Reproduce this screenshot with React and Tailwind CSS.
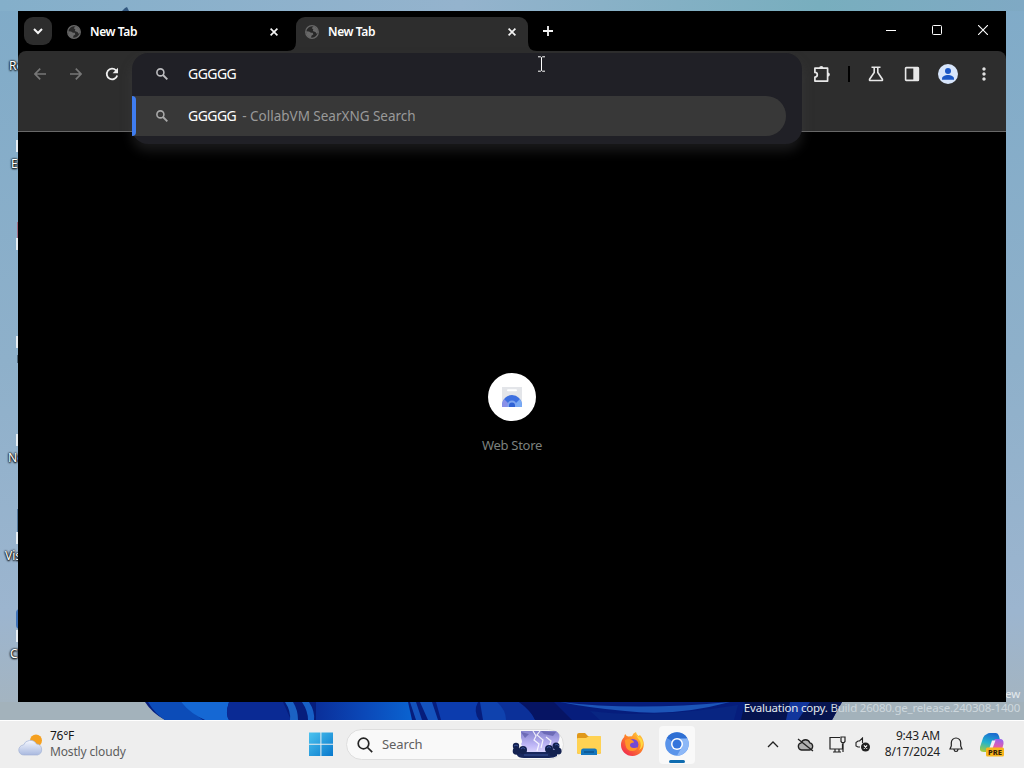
import React from 'react';
import { MdMoreVert } from 'react-icons/md';

const desktopLabels = [
  { text: 'Re', className: 'left-[9px] top-[58px]' },
  { text: 'Ed', className: 'left-[11px] top-[156px]' },
  { text: 'Ne', className: 'left-[8px] top-[450px]' },
  { text: 'Visu', className: 'left-[5px] top-[548px]' },
  { text: 'Ch', className: 'left-[10px] top-[646px]' },
];

function Wallpaper() {
  return (
    <svg className="absolute inset-0" width="1024" height="720" viewBox="0 0 1024 720">
      <defs>
        <linearGradient id="sky" x1="0" y1="0" x2="0" y2="1">
          <stop offset="0" stopColor="#80abc8" />
          <stop offset="0.5" stopColor="#8eb0ca" />
          <stop offset="0.85" stopColor="#9cb5cf" />
          <stop offset="1" stopColor="#a5b4be" />
        </linearGradient>
        <linearGradient id="top" x1="0" y1="0" x2="1" y2="0">
          <stop offset="0" stopColor="#84afca" />
          <stop offset="0.45" stopColor="#94b3cd" />
          <stop offset="0.8" stopColor="#78aebe" />
          <stop offset="1" stopColor="#7fa9c4" />
        </linearGradient>
        <linearGradient id="petal" x1="0" y1="0" x2="1" y2="0">
          <stop offset="0" stopColor="#0a2f9a" />
          <stop offset="0.5" stopColor="#0b48b8" />
          <stop offset="1" stopColor="#0a63d0" />
        </linearGradient>
      </defs>
      <rect width="1024" height="720" fill="url(#sky)" />
      <rect width="1024" height="11" fill="url(#top)" />
      <path d="M122 11l3-3 2-1 2 4z" fill="#31567e" />
      <rect y="702" width="1024" height="18" fill="#a3b2bb" />
      <path d="M145 702H842L832 720H165Q152 713 145 702z" fill="#061d7c" />
      <path d="M148 702h33q12 11 22 18h-38q-10-6-17-18z" fill="#0c4cb8" />
      <path d="M181 702h48q-4 12 0 18h-24q-14-6-24-18z" fill="#1568d4" />
      <path d="M229 702h54l8 18h-62q-4-6 0-18z" fill="#0a2a94" />
      <path d="M285 702h8q5 8 5 18h-8q1-9-5-18z" fill="#1b62c4" />
      <path d="M302 702h7q6 9 5 18h-6q0-9-6-18z" fill="#1760c6" />
      <path d="M316 702h92l4 18h-96z" fill="url(#petal)" />
      <path d="M410 702h6l6 18h-6zM420 702h12l6 18h-10z" fill="#1453bd" />
      <path d="M436 702h42q-5 9 1 18h-38z" fill="#0c3cae" />
      <path d="M480 702h35q15 8 20 18h-52z" fill="#0f42ae" />
      <path d="M497 702h22q12 9 16 18h-29q0-10-9-18z" fill="#0b3099" />
      <path d="M519 702h35l18 18h-37q-4-10-16-18z" fill="#061463" />
      <path d="M560 702q75 9 170 0-55 15-105 9-35-3-65-9z" fill="#1c55b8" />
      <path d="M590 711q60 8 148-6l-4 15H600z" fill="#082582" />
      <path d="M745 702h97l-10 18h-91z" fill="#06144f" />
      <path d="M790 702h20l-12 18h-12z" fill="#12369c" />
    </svg>
  );
}

function CloseIcon() {
  return (
    <svg width="8" height="8" viewBox="0 0 8 8" fill="none" stroke="#f4f4f4" strokeWidth="1.7">
      <path d="M.6.6l6.8 6.8M7.400.6L.6 7.400" />
    </svg>
  );
}

function GlobeIcon() {
  return (
    <svg width="14" height="14" viewBox="0 0 14 14">
      <circle cx="7" cy="7" r="6.300" fill="#282828" stroke="#686868" strokeWidth="1.300" />
      <path d="M8.300 1.200L6.800 3.200 8.300 4.300 7.800 6l3 1.200.4 1.600 1.800-1.300Q13 2.500 8.300 1.200z" fill="#686868" />
      <path d="M1 6.200l3 .3 2 1.300h1.800l.5 1.700-1.900 1.300-.3 2.300Q1.500 12.200 1 6.200z" fill="#686868" />
    </svg>
  );
}

function SearchGlyph({ className }) {
  return (
    <svg className={className} width="12" height="12" viewBox="0 0 12 12" fill="none" stroke="currentColor">
      <circle cx="4.400" cy="4.400" r="3.500" strokeWidth="1.600" />
      <path d="M7 7l4.300 4.300" strokeWidth="1.900" />
    </svg>
  );
}

function TabStrip() {
  return (
    <div className="flex h-10 items-end bg-black">
      <button className="ml-[6px] mb-[6px] flex h-7 w-7 items-center justify-center rounded-[9px] bg-[#2d2d2d]">
        <svg width="10" height="7" viewBox="0 0 10 7" fill="none" stroke="#f5f5f5" strokeWidth="2">
          <path d="M1 1l4 4 4-4" />
        </svg>
      </button>
      <div className="flex h-[34px] w-[244px] items-center pb-[5px] pl-[15px] pr-[18px]">
        <GlobeIcon />
        <span className="ml-[9px] flex-1 pt-px text-[12px] font-semibold tracking-[-0.38px]">New Tab</span>
        <CloseIcon />
      </div>
      <div className="relative flex h-[34px] w-[232px] items-center rounded-t-[9px] bg-[#2d2d2d] pb-[5px] pl-[9px] pr-[12px]">
        <svg className="absolute bottom-0 -left-[9px]" width="9" height="9" viewBox="0 0 9 9">
          <path d="M9 0v9H0q9 0 9-9z" fill="#2d2d2d" />
        </svg>
        <svg className="absolute bottom-0 -right-[9px]" width="9" height="9" viewBox="0 0 9 9">
          <path d="M0 0v9h9Q0 9 0 0z" fill="#2d2d2d" />
        </svg>
        <GlobeIcon />
        <span className="ml-[9px] flex-1 pt-px text-[12px] font-semibold tracking-[-0.38px]">New Tab</span>
        <CloseIcon />
      </div>
      <svg className="mb-[15px] ml-[15px]" width="10" height="10" viewBox="0 0 10 10" stroke="#f5f5f5" strokeWidth="1.8">
        <path d="M5 0v10M0 5h10" />
      </svg>
      <div className="ml-auto flex items-center gap-9 pb-4 pr-[18px]">
        <svg width="10" height="10" viewBox="0 0 10 10" stroke="#fff" shapeRendering="crispEdges">
          <path d="M0 5.5h10" />
        </svg>
        <svg width="10" height="10" viewBox="0 0 10 10" fill="none" stroke="#fff">
          <rect x=".5" y=".5" width="9" height="9" rx="1" />
        </svg>
        <svg width="10" height="10" viewBox="0 0 10 10" stroke="#fff" strokeWidth="1.1">
          <path d="M0 0l10 10M10 0L0 10" />
        </svg>
      </div>
    </div>
  );
}

function Omnibox() {
  return (
    <div className="absolute left-[114px] top-[42px] w-[670px] rounded-[16px] bg-[#202026] pb-2 shadow-[0_7px_12px_rgba(75,75,80,0.34)]">
      <div className="flex h-[42px] items-center pb-[2px] pl-[24px]">
        <SearchGlyph className="mt-[2px] text-[#bcbcbf]" />
        <span className="ml-5 text-[14px] tracking-[-0.55px] text-white">GGGGG</span>
      </div>
      <div className="mr-[16px] mt-px flex h-10 items-center overflow-hidden rounded-r-full bg-[#383838]">
        <div className="h-10 w-1 rounded-r-sm bg-[#3f7df0]" />
        <SearchGlyph className="ml-5 text-[#a8a8a8]" />
        <span className="ml-5 pb-px text-[14px] tracking-[-0.55px] text-white">GGGGG</span>
        <span className="ml-[6px] text-[13.5px] tracking-[-0.01px] text-[#9a9a9a]">- CollabVM SearXNG Search</span>
      </div>
    </div>
  );
}

function Toolbar() {
  return (
    <div className="h-[81px] rounded-t-[8px] border-b border-[#686868] bg-[#2d2d2d] pt-[14px]">
      <div className="flex h-[18px] items-center pl-[16px] pr-[12px]">
        <svg width="12" height="12" viewBox="0 0 12 12" fill="none" stroke="#777" strokeWidth="1.700">
          <path d="M6.200.700L1 6l5.200 5.300M1 6h11" />
        </svg>
        <svg className="ml-6" width="12" height="12" viewBox="0 0 12 12" fill="none" stroke="#777" strokeWidth="1.700">
          <path d="M5.800.700L11 6l-5.200 5.300M11 6H0" />
        </svg>
        <svg className="ml-[23px]" width="14" height="14" viewBox="0 0 14 14" fill="none" stroke="#eee" strokeWidth="1.800">
          <path d="M12.200 8.400A5.300 5.300 0 1 1 11 3.400l1.200 1.300" />
          <path d="M13 .8v5.400H7.600z" fill="#eee" stroke="none" />
        </svg>
        <div className="ml-auto flex items-center">
          <svg className="mr-px" width="18" height="18" viewBox="0 0 18 18" fill="none" stroke="#e8e8e8" strokeWidth="1.700" strokeLinejoin="round">
            <path d="M1.900 3.200h12.700v12.900H1.900V12q2.400 0 2.400-2.300T1.900 7.400z" />
            <path d="M6.200 3a2.100 2.100 0 0 1 4.200 0zM14.800 7.500a2.100 2.100 0 0 1 0 4.200z" fill="#e8e8e8" stroke="none" />
          </svg>
          <div className="ml-[16px] h-4 w-[2px] bg-black" />
          <svg className="ml-[18px]" width="16" height="16" viewBox="0 0 16 16" fill="none" stroke="#e8e8e8" strokeWidth="1.6">
            <path d="M3.5 1.3h9M6.2 1.3v5.2L1.600 13.200q-.5 1.300.9 1.300h11q1.400 0 .9-1.300L9.800 6.500V1.300" />
          </svg>
          <svg className="ml-5" width="16" height="16" viewBox="0 0 16 16">
            <rect x="1.600" y="1.600" width="12.800" height="12.800" rx=".7" fill="none" stroke="#e8e8e8" strokeWidth="1.600" />
            <path d="M9.300 1.500h5.200v13H9.300z" fill="#e8e8e8" />
          </svg>
          <svg className="ml-[18px]" width="20" height="20" viewBox="0 0 20 20">
            <circle cx="10" cy="10" r="10" fill="#d7e5fb" />
            <circle cx="10" cy="7" r="3" fill="#1b57c5" />
            <path d="M4 15.800v-1.200c0-2.400 3.300-3.600 6-3.600s6 1.200 6 3.600v1.200z" fill="#1b57c5" />
          </svg>
          <MdMoreVert size={20} className="ml-4 text-[#e0e0e0]" />
        </div>
      </div>
    </div>
  );
}

function WebStoreTile() {
  return (
    <div className="flex flex-col items-center pt-[241px]">
      <div className="flex h-12 w-12 items-center justify-center rounded-full bg-white">
        <svg width="22" height="20" viewBox="0 0 22 20">
          <path d="M1 0h20v20H1z" fill="#e3e5e9" />
          <path d="M7 3.200h8" stroke="#fff" strokeWidth="2" strokeLinecap="round" />
          <path d="M1 20v-2a10 10 0 0 1 20 0v2z" fill="#3d6fe0" />
          <path d="M1 20v-2q0-3 2-6l5 5-1 3z" fill="#8a91e8" />
          <path d="M21 20v-2q0-3-2-6l-5 5 1 3z" fill="#79aaf5" />
          <path d="M6.500 20v-2a4.500 4.500 0 0 1 9 0v2z" fill="#7ea5f0" />
          <path d="M8 20v-1.600a3 3 0 0 1 6 0V20z" fill="#2f62d5" />
        </svg>
      </div>
      <span className="mt-[14px] text-[13px] leading-5 tracking-[-0.3px] text-[#7c817e]">Web Store</span>
    </div>
  );
}

function BrowserWindow() {
  return (
    <div className="absolute left-[18px] top-[11px] h-[691px] w-[988px] bg-black text-white">
      <TabStrip />
      <Toolbar />
      <WebStoreTile />
      <Omnibox />
      <svg className="absolute left-[519px] top-[45px]" width="9" height="16" viewBox="0 0 9 16" fill="none">
        <path d="M1 .8h2.500l1 .8 1-.8H8M4.500 1.500v13M1 15.200h2.500l1-.8 1 .8H8" stroke="#fff" />
      </svg>
    </div>
  );
}

function Weather() {
  return (
    <div className="flex w-[300px] items-center pl-[18px]">
      <svg width="26" height="22" viewBox="0 0 26 22">
        <defs>
          <linearGradient id="cloud" x1="0" y1="0" x2="0" y2="1">
            <stop offset="0" stopColor="#f4f7ff" />
            <stop offset="1" stopColor="#a9b9df" />
          </linearGradient>
        </defs>
        <circle cx="18" cy="6.500" r="6" fill="#f5a01f" />
        <path d="M6 21a5 5 0 0 1-.5-10 7.200 7.200 0 0 1 13-1A5.600 5.600 0 0 1 19.500 21z" fill="url(#cloud)" stroke="#a4b3d6" strokeWidth=".7" />
      </svg>
      <div className="ml-[6px] flex flex-col pb-[2px] text-[12px] leading-4">
        <span className="tracking-[-0.3px] text-[#151515]">76°F</span>
        <span className="tracking-[-0.15px] text-[#5d5d5d]">Mostly cloudy</span>
      </div>
    </div>
  );
}

function StartLogo() {
  return (
    <svg className="mb-[2px]" width="24" height="24" viewBox="0 0 24 24">
      <defs>
        <linearGradient id="start" x1="0" y1="0" x2="1" y2="1">
          <stop offset="0" stopColor="#4cc3ef" />
          <stop offset="1" stopColor="#0878cc" />
        </linearGradient>
      </defs>
      <path d="M0 .5h11.400v11.200H0zM12.400.5H24v11.200H12.400zM0 12.700h11.400V24H0zM12.400 12.700H24V24H12.400z" fill="url(#start)" />
    </svg>
  );
}

function SearchArt() {
  return (
    <svg width="50" height="28" viewBox="0 0 50 28">
      <defs>
        <linearGradient id="storm" x1="0" y1="0" x2="0" y2="1">
          <stop offset="0" stopColor="#8684cf" />
          <stop offset="0.6" stopColor="#c0b8f7" />
          <stop offset="1" stopColor="#e3deff" />
        </linearGradient>
      </defs>
      <path d="M9 1h35q5 3 3 9l-5 12-12 3-16-2-5-9q2-2 0-6z" fill="url(#storm)" />
      <path d="M9 2l8 2-4 4zM29 1l15 1-3 4-9-2z" fill="#5d5ba8" opacity=".7" />
      <path d="M21 1l3 5-2 4 5 4-2 7M28 1l-3 4 6 5-2 8M34 7l5 4-2 6" stroke="#fff" strokeWidth="1.200" opacity=".85" fill="none" />
      <path d="M5 22h40v4q-3 2-8 2H12q-6 0-7-3z" fill="#17265c" />
      <g fill="#132150">
        <circle cx="4" cy="16" r="3.200" />
        <circle cx="4.500" cy="21" r="3.800" />
        <circle cx="11" cy="20" r="4" />
        <circle cx="37" cy="19" r="4" />
        <circle cx="44" cy="16" r="3.500" />
        <circle cx="46" cy="21" r="3.600" />
        <circle cx="41" cy="23" r="3.500" />
      </g>
      <path d="M2 16q2-2 4 0M9 19q2-3 4 0M35 18q2-3 4 0M43 15q2-2 4 1M12 25h24" stroke="#3a5299" strokeWidth="1" fill="none" />
    </svg>
  );
}

function FolderIcon() {
  return (
    <svg width="24" height="22" viewBox="0 0 24 22">
      <path d="M0 2q0-2 2-2h6l3 3h11q2 0 2 2v14q0 2-2 2H2q-2 0-2-2z" fill="#e0981a" />
      <path d="M0 6q0-1 1-1h8l3-2h11q1 0 1 1v15q0 2-2 2H2q-2 0-2-2z" fill="#ffd253" />
      <path d="M4 22v-4q0-2.500 2-2.500h12q2 0 2 2.500v4z" fill="#1476bd" />
      <path d="M7 19h10" stroke="#0b548f" strokeWidth="1.500" />
    </svg>
  );
}

function FirefoxIcon() {
  return (
    <svg width="23" height="24" viewBox="0 0 23 24">
      <defs>
        <linearGradient id="fox" x1="1" y1="0" x2="0.2" y2="1">
          <stop offset="0" stopColor="#ffe14a" />
          <stop offset="0.45" stopColor="#ff8a26" />
          <stop offset="1" stopColor="#f0274f" />
        </linearGradient>
      </defs>
      <path d="M3.200 5q.2-2 1-3 1 2.200 3 2.600Q9.500 4 11 4.200 12 1 15 0q.3 2.500 2.500 4L19 3q3.800 4 3.800 9.500C22.800 19 18 24 11.500 24S0 19 0 13q0-5 3.200-8z" fill="url(#fox)" />
      <circle cx="11.800" cy="12.500" r="5.600" fill="#7549d6" />
      <path d="M4 8q4-2 7 0 2 1 2 2.500-4 .3-4 2.500 0 3 4 3 2.500 0 3.500-1-1 4-5 4-6 0-7-6-.5-3-.5-5z" fill="#ff9629" />
      <path d="M15 1q1 5 4 8 2 5-1 9 4-2 4-7-1-5-4-6-2-1-3-4z" fill="#ffd83f" />
    </svg>
  );
}

function ChromiumIcon() {
  return (
    <svg width="24" height="24" viewBox="0 0 24 24">
      <circle cx="12" cy="12" r="11.800" fill="#5a94ea" />
      <path d="M12 12L1.800 6A11.800 11.800 0 0 1 22.200 6z" fill="#2f6fd3" />
      <path d="M12 6.400h10.400A11.800 11.800 0 0 1 12 23.800l5-9z" fill="#8db8f7" />
      <circle cx="12" cy="12" r="6" fill="#fff" />
      <circle cx="12" cy="12" r="4.500" fill="#3475dc" />
    </svg>
  );
}

function CopilotIcon() {
  return (
    <svg width="26" height="26" viewBox="0 0 26 26">
      <defs>
        <linearGradient id="cpl" x1="0.5" y1="0" x2="0.2" y2="1">
          <stop offset="0" stopColor="#1c6ed0" />
          <stop offset="0.5" stopColor="#21b2cf" />
          <stop offset="1" stopColor="#a4cd3c" />
        </linearGradient>
        <linearGradient id="cpr" x1="0.6" y1="0" x2="0.4" y2="1">
          <stop offset="0" stopColor="#9a63ed" />
          <stop offset="0.5" stopColor="#e55ca9" />
          <stop offset="1" stopColor="#f58a55" />
        </linearGradient>
      </defs>
      <path d="M7 2q1-1 3-1h6q2 0 3 3l1 4h-4q-2 0-3 3l-2 6q-1 3-4 3H4q-5 0-4-5L3 6q1-3 4-4z" fill="url(#cpl)" />
      <path d="M15 7h5q4 0 3.500 5l-2 7q-1 3-4 3h-7q-3 0-4-3h2q2 0 3-3l2-6q.5-2 1.500-3z" fill="url(#cpr)" />
      <path d="M12 8.500h3.500l-2.800 7.500H9.500z" fill="#f3eef6" />
      <rect x="6" y="15.500" width="18" height="9" rx="1.500" fill="#f8b51c" />
      <text x="15" y="22.800" textAnchor="middle" fontSize="7.500" fontWeight="800" fill="#33200a">PRE</text>
    </svg>
  );
}

function Tray() {
  return (
    <div className="ml-auto flex items-center">
      <svg width="12" height="7" viewBox="0 0 12 7" fill="none" stroke="#222" strokeWidth="1.300">
        <path d="M1 6l5-5 5 5" />
      </svg>
      <svg className="ml-[18px]" width="17" height="14" viewBox="0 0 17 14" fill="none" stroke="#222" strokeWidth="1.300">
        <path d="M4.500 12a3.600 3.600 0 0 1-.3-7.100 4.500 4.500 0 0 1 8.600 0 3.600 3.600 0 0 1-.3 7.100z" fill="#b0b0b0" />
        <path d="M1 1l15 12" />
      </svg>
      <svg className="ml-[15px]" width="17" height="17" viewBox="0 0 17 17" fill="none" stroke="#222" strokeWidth="1.200">
        <path d="M11 1.500H1v11.500h12.500V8M4 16h8M6 13v3M10 13v3" />
        <path d="M12 1h4v4.500l-1 1.200h-2l-1-1.200zM14 6.700V16" />
      </svg>
      <svg className="ml-[9px]" width="16" height="15" viewBox="0 0 16 15" fill="none" stroke="#222" strokeWidth="1.100">
        <path d="M5 10H3L1 9V5.500L3 4h1.500L7.500 1v5" />
        <circle cx="10.500" cy="10" r="4.500" fill="#222" stroke="none" />
        <path d="M8.900 8.400l3.200 3.200M12.100 8.400l-3.200 3.200" stroke="#fff" />
      </svg>
      <div className="ml-[9px] flex w-[60px] flex-col items-end whitespace-nowrap pb-[2px] text-[12px] leading-4 tracking-[-0.2px] text-[#222]">
        <span>9:43 AM</span>
        <span>8/17/2024</span>
      </div>
      <svg className="ml-[9px]" width="14" height="16" viewBox="0 0 14 16" fill="none" stroke="#222" strokeWidth="1.200">
        <path d="M7 1a4.700 4.700 0 0 0-4.700 4.700V9L1 12h12l-1.300-3V5.700A4.700 4.700 0 0 0 7 1zM5 12.500q.2 2 2 2t2-2" />
      </svg>
      <div className="ml-[17px] mr-[18px]">
        <CopilotIcon />
      </div>
    </div>
  );
}

function Taskbar() {
  return (
    <div className="flex h-12 items-center border-t border-white bg-[#eeeeee]">
      <Weather />
      <div className="flex items-center pl-[9px]">
        <StartLogo />
        <div className="ml-[13px] flex h-[31px] w-[218px] items-center rounded-full border border-[#dedede] bg-[#f9f9f9] pl-[10px]">
          <svg width="16" height="16" viewBox="0 0 16 16" fill="none" stroke="#252525" strokeWidth="1.700">
            <circle cx="6.500" cy="6.500" r="5.300" />
            <path d="M10.500 10.500l4.700 4.700" />
          </svg>
          <span className="ml-[9px] flex-1 text-[13px] tracking-[-0.1px] text-[#606060]">Search</span>
          <div className="mr-px pb-px">
            <SearchArt />
          </div>
        </div>
        <div className="ml-[13px] pb-[2px]">
          <FolderIcon />
        </div>
        <div className="ml-5 pb-px">
          <FirefoxIcon />
        </div>
        <div className="ml-[15px] flex h-[38px] w-9 flex-col items-center rounded bg-[#f9f9f9] pt-[6px]">
          <ChromiumIcon />
          <div className="mt-1 h-[3px] w-4 rounded-full bg-[#0f6cb0]" />
        </div>
      </div>
      <Tray />
    </div>
  );
}

export default function App() {
  return (
    <div className="flex h-[768px] w-[1024px] flex-col overflow-hidden font-['Noto_Sans','Open_Sans',sans-serif]">
      <div className="relative h-[720px] overflow-hidden">
        <Wallpaper />
        {desktopLabels.map((label) => (
          <span
            key={label.text}
            className={`absolute text-[12px] leading-4 text-white [text-shadow:0_0_2px_#000,0_0_2px_#000,0_1px_2px_#000] ${label.className}`}
          >
            {label.text}
          </span>
        ))}
        {/* slivers of the shortcut icons that stick out from under the window */}
        <div className="absolute left-[16px] top-[140px] h-3 w-1 bg-[#e6edf2]" />
        <div className="absolute left-[17px] top-[222px] h-4 w-1 bg-[#a56c82]" />
        <div className="absolute left-[16px] top-[238px] h-3 w-1 bg-[#e6edf2]" />
        <div className="absolute left-[16px] top-[336px] h-3 w-1 bg-[#e6edf2]" />
        <div className="absolute left-[17px] top-[355px] h-2 w-1 bg-[#50687c]" />
        <div className="absolute left-[16px] top-[434px] h-3 w-1 bg-[#e6edf2]" />
        <div className="absolute left-[17px] top-[509px] h-7 w-1 bg-[#55799c]" />
        <div className="absolute left-[16px] top-[532px] h-3 w-1 bg-[#e6edf2]" />
        <div className="absolute left-[16px] top-[609px] h-5 w-1 rounded-l bg-[#3f72b8]" />
        <div className="absolute left-[16px] top-[630px] h-3 w-1 bg-[#e6edf2]" />
        <div className="absolute right-1 top-[687px] flex flex-col items-end text-[11.500px] leading-[14px] tracking-[-0.21px] text-[#e3e9ed]">
          <span>Windows 11 Pro Insider Preview</span>
          <span className="whitespace-pre">
            Evaluation copy. <span className="text-[#cdd7dd]">Build 26080.ge_release.240308-1400</span>
          </span>
        </div>
        <BrowserWindow />
      </div>
      <Taskbar />
    </div>
  );
}
